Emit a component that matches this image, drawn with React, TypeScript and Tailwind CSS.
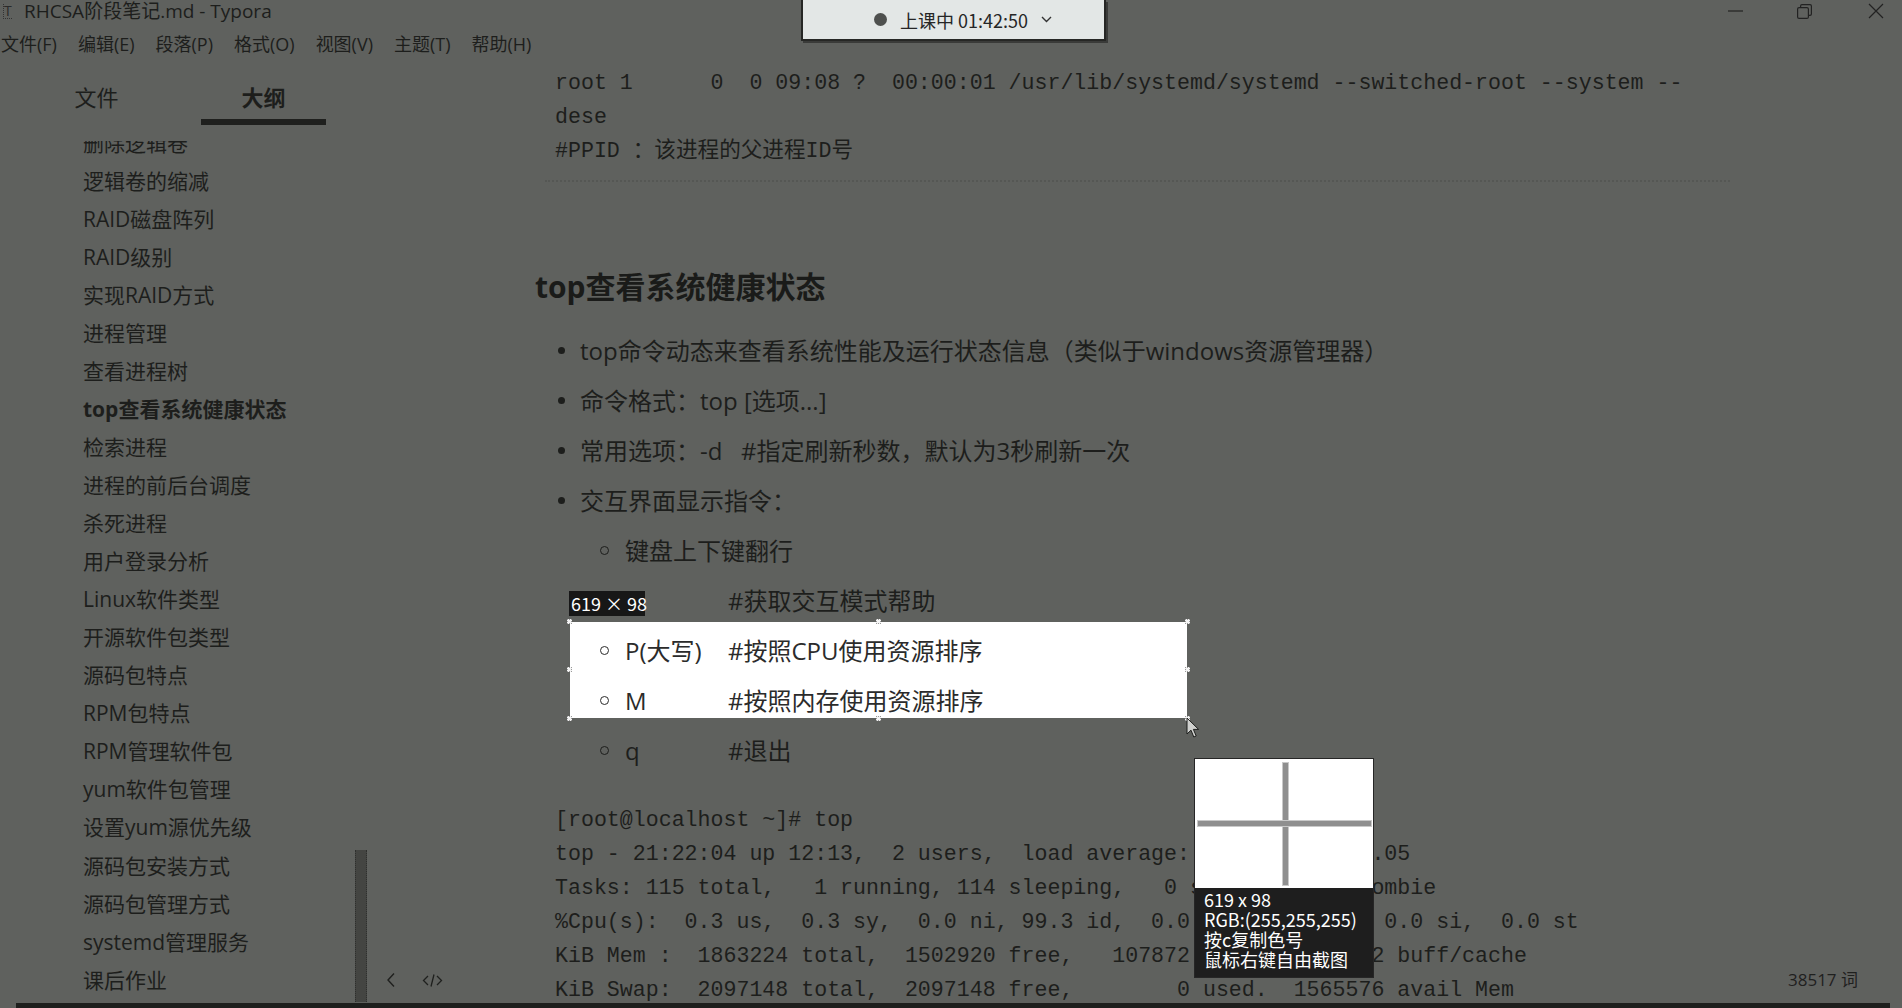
import React from "react";

const sidebarItems: { t: string; b?: boolean }[] = [
  { t: "删除逻辑卷" },
  { t: "逻辑卷的缩减" },
  { t: "RAID磁盘阵列" },
  { t: "RAID级别" },
  { t: "实现RAID方式" },
  { t: "进程管理" },
  { t: "查看进程树" },
  { t: "top查看系统健康状态", b: true },
  { t: "检索进程" },
  { t: "进程的前后台调度" },
  { t: "杀死进程" },
  { t: "用户登录分析" },
  { t: "Linux软件类型" },
  { t: "开源软件包类型" },
  { t: "源码包特点" },
  { t: "RPM包特点" },
  { t: "RPM管理软件包" },
  { t: "yum软件包管理" },
  { t: "设置yum源优先级" },
  { t: "源码包安装方式" },
  { t: "源码包管理方式" },
  { t: "systemd管理服务" },
  { t: "课后作业" },
];

const menus = ["文件(F)", "编辑(E)", "段落(P)", "格式(O)", "视图(V)", "主题(T)", "帮助(H)"];

const code1 = [
  "root 1      0  0 09:08 ?  00:00:01 /usr/lib/systemd/systemd --switched-root --system --",
  "dese",
  "#PPID ：该进程的父进程ID号",
];

const code2 = [
  "[root@localhost ~]# top",
  "top - 21:22:04 up 12:13,  2 users,  load average: 0.00, 0.01, 0.05",
  "Tasks: 115 total,   1 running, 114 sleeping,   0 stopped,   0 zombie",
  "%Cpu(s):  0.3 us,  0.3 sy,  0.0 ni, 99.3 id,  0.0 wa,  0.0 hi,  0.0 si,  0.0 st",
  "KiB Mem :  1863224 total,  1502920 free,   107872 used,   252432 buff/cache",
  "KiB Swap:  2097148 total,  2097148 free,        0 used.  1565576 avail Mem",
];

const bullets = [
  "top命令动态来查看系统性能及运行状态信息（类似于windows资源管理器）",
  "命令格式：top [选项...]",
  "常用选项：-d   #指定刷新秒数，默认为3秒刷新一次",
  "交互界面显示指令：",
];

const subs: { k: string; c?: string }[] = [
  { k: "键盘上下键翻行" },
  { k: "h", c: "#获取交互模式帮助" },
  { k: "P(大写)", c: "#按照CPU使用资源排序" },
  { k: "M", c: "#按照内存使用资源排序" },
  { k: "q", c: "#退出" },
];

function Handle({ cls }: { cls: string }) {
  return <span className={`absolute w-[5px] h-[5px] border border-dotted border-[#9a9a9a] bg-[#f4f4f4] ${cls}`} />;
}

export default function App() {
  return (
    <div className="relative w-[1902px] h-[1008px] overflow-hidden bg-[#5f615e] text-[#1d1e1c] font-['Open_Sans','Noto_Sans_CJK_SC',sans-serif]">
      {/* Title bar */}
      <div className="h-[22px] flex items-center">
        <span className="ml-[3px] w-[9px] text-[14px] leading-none text-[#2a2a2a] border-l border-b border-dotted border-[#333]">T</span>
        <span className="ml-[12px] text-[19px] leading-[22px]">RHCSA阶段笔记.md - Typora</span>
        <div className="ml-auto flex items-center pr-[18px]">
          <svg width="15" height="2" viewBox="0 0 15 2" className="mr-[54px]">
            <line x1="0" y1="1" x2="15" y2="1" stroke="#222" strokeWidth="1.2" />
          </svg>
          <svg width="15" height="15" viewBox="0 0 15 15" fill="none" stroke="#222" strokeWidth="1.2" className="mr-[56px]">
            <rect x="0.6" y="3.6" width="10.8" height="10.8" rx="1.5" />
            <path d="M3.6 3.5V2a1.4 1.4 0 0 1 1.4-1.4h8A1.4 1.4 0 0 1 14.4 2v8a1.4 1.4 0 0 1-1.4 1.4h-1.5" />
          </svg>
          <svg width="16" height="16" viewBox="0 0 16 16" fill="none" stroke="#222" strokeWidth="1.2">
            <path d="M1 1L15 15M15 1L1 15" />
          </svg>
        </div>
      </div>

      {/* Menu bar */}
      <div className="h-[42px] pt-[2px] flex items-center gap-[21px] pl-[1px] text-[18px]">
        {menus.map((m) => (
          <span key={m} className="leading-[24px]">{m}</span>
        ))}
      </div>

      {/* Main */}
      <div className="flex h-[939px]">
        {/* Sidebar */}
        <aside className="relative w-[370px] flex flex-col shrink-0">
          <div className="grid grid-cols-[167px_167px] pl-[13px] pt-[18px] text-[22px]">
            <div className="flex flex-col items-center">
              <span className="leading-[30px]">文件</span>
              <span className="mt-[7px] w-[125px] h-[6px]" />
            </div>
            <div className="flex flex-col items-center">
              <span className="leading-[30px] font-bold">大纲</span>
              <span className="mt-[7px] w-[125px] h-[6px] bg-[#1f201e]" />
            </div>
          </div>
          <div className="mt-[16px] flex-1 overflow-hidden">
            <div className="-mt-[17.4px]">
              {sidebarItems.map((it) => (
                <div
                  key={it.t}
                  className={`h-[38.05px] leading-[38.05px] pl-[83px] text-[21px] whitespace-nowrap ${it.b ? "font-bold" : ""}`}
                >
                  {it.t}
                </div>
              ))}
            </div>
          </div>
          <div className="absolute left-[355px] top-[786px] w-[12px] h-[152px] bg-[#444542] border-x border-dotted border-[#2e2f2d]" />
        </aside>

        {/* Editor */}
        <main className="relative flex-1 overflow-hidden">
          {/* selection white box (behind text) */}
          <div className="absolute z-0 left-[200px] top-[558px] w-[617px] h-[96px] bg-white">
            <Handle cls="-left-[3px] -top-[3px]" />
            <Handle cls="left-[306px] -top-[3px]" />
            <Handle cls="-right-[3px] -top-[3px]" />
            <Handle cls="-left-[3px] top-[45px]" />
            <Handle cls="-right-[3px] top-[45px]" />
            <Handle cls="-left-[3px] -bottom-[3px]" />
            <Handle cls="left-[306px] -bottom-[3px]" />
            <Handle cls="-right-[3px] -bottom-[3px]" />
          </div>

          <div className="relative z-10 pl-[165px] pt-[1.5px]">
            <div className="pl-[20px] font-['Liberation_Mono','Noto_Sans_CJK_SC',monospace] text-[21.6px] leading-[34px] whitespace-pre">
              {code1.map((l, i) => (
                <div key={i}>{l}</div>
              ))}
            </div>
            <div className="mt-[12.5px] ml-[10px] w-[1185px] border-t-2 border-dotted border-[#555754]" />

            <h2 className="mt-[85px] text-[30px] leading-[40px] font-bold text-[#1a1b19]">top查看系统健康状态</h2>

            <div className="mt-[18.5px] text-[24px]">
              {bullets.map((b) => (
                <div key={b} className="h-[50px] flex items-center whitespace-pre">
                  <span className="w-[45px] pl-[22.5px] flex items-center">
                    <span className="w-[7px] h-[7px] rounded-full bg-[#1d1e1c]" />
                  </span>
                  <span className="leading-[50px]">{b}</span>
                </div>
              ))}
              {subs.map((s, i) => (
                <div key={i} className={`h-[50px] flex items-center whitespace-nowrap ${i >= 2 && i <= 3 ? "text-[#2b2b2b]" : ""}`}>
                  <span className="w-[90px] pl-[65px] flex items-center">
                    <span className="w-[9px] h-[9px] rounded-full border-[1.5px] border-current" />
                  </span>
                  {s.c ? (
                    <>
                      <span className="w-[103px] leading-[50px]">{s.k}</span>
                      <span className="leading-[50px]">{s.c}</span>
                    </>
                  ) : (
                    <span className="leading-[50px]">{s.k}</span>
                  )}
                </div>
              ))}
            </div>

            <div className="mt-[27.5px] pl-[20px] font-['Liberation_Mono','Noto_Sans_CJK_SC',monospace] text-[21.6px] leading-[34px] whitespace-pre">
              {code2.map((l, i) => (
                <div key={i}>{l}</div>
              ))}
            </div>
          </div>

          {/* size label */}
          <div className="absolute z-20 left-[199px] top-[527px] w-[76px] h-[25px] bg-[#171717] text-white text-[18px] leading-[25px] px-[2px] whitespace-nowrap font-['Noto_Sans_CJK_SC',sans-serif]">
            619 × 98
          </div>

          {/* cursor */}
          <svg className="absolute z-20 left-[816px] top-[653px]" width="14" height="22" viewBox="0 0 14 22">
            <path d="M1 1 L1 17 L5 13.2 L7.8 20 L10.2 19 L7.4 12.4 L12.6 12.4 Z" fill="#cfd0ce" stroke="#1d1e1c" strokeWidth="1" strokeLinejoin="round" />
          </svg>

          {/* magnifier */}
          <div className="absolute z-20 left-[824px] top-[694px] w-[180px] h-[220px] border border-[#262626] flex flex-col">
            <div className="relative h-[129px] bg-white">
              <div className="absolute left-[87px] top-[3px] w-[7px] h-[124px] bg-[#8f8f8f] border border-[#c9c9c9]" />
              <div className="absolute left-[2px] top-[61px] w-[175px] h-[7px] bg-[#8f8f8f] border border-[#c9c9c9]" />
            </div>
            <div className="flex-1 bg-[#1e1e1e] text-white text-[18px] leading-[20px] pl-[9px] pt-[1px] font-['Noto_Sans_CJK_SC',sans-serif] whitespace-nowrap">
              <div>619 x 98</div>
              <div>RGB:(255,255,255)</div>
              <div>按c复制色号</div>
              <div>鼠标右键自由截图</div>
            </div>
          </div>

          {/* footer */}
          <div className="absolute z-20 left-0 right-0 top-[902px] h-[28px] flex items-center">
            <svg className="ml-[16px]" width="10" height="16" viewBox="0 0 10 16" fill="none" stroke="#1f201e" strokeWidth="1.4">
              <path d="M8 1.5L2 8l6 6.5" />
            </svg>
            <svg className="ml-[26px]" width="21" height="15" viewBox="0 0 21 15" fill="none" stroke="#1f201e" strokeWidth="1.3">
              <path d="M6 3L1.5 7.5 6 12M15 3l4.5 4.5L15 12M12 1.5l-3 12" />
            </svg>
            <span className="ml-auto mr-[44px] text-[17px] leading-[28px] text-[#1f201e]">38517 词</span>
          </div>
        </main>
      </div>

      {/* bottom dark strip */}
      <div className="ml-[16px] w-[1874px] h-[5px] bg-[#1e1f1d]" />

      {/* floating timer */}
      <div className="absolute left-[801px] top-0 w-[305px] h-[41px] bg-[#e3e7e6] border-x-2 border-b-2 border-[#262725] shadow-[2px_2px_0_#3a3b39] flex items-center pl-[71px]">
        <span className="w-[13px] h-[13px] rounded-full bg-[#4e504e]" />
        <span className="ml-[13px] text-[18px] leading-[24px] text-[#262626] font-['Noto_Sans_CJK_SC',sans-serif]">上课中 01:42:50</span>
        <svg className="ml-[13px]" width="11" height="7" viewBox="0 0 11 7" fill="none" stroke="#333" strokeWidth="1.4">
          <path d="M1 1l4.5 4.5L10 1" />
        </svg>
      </div>
    </div>
  );
}
